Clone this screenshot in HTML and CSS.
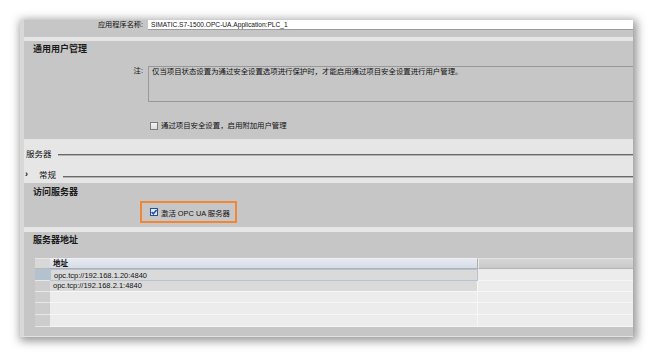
FILE: index.html
```html
<!DOCTYPE html>
<html lang="zh-CN">
<head>
<meta charset="utf-8">
<title>OPC UA</title>
<link rel="stylesheet" href="styles.css">
</head>
<body>
<div class="frame">
  <div class="row-app">
    <span class="lbl">应用程序名称:</span>
    <div class="input">SIMATIC.S7-1500.OPC-UA.Application:PLC_1</div>
  </div>
  <div class="strip s4"></div>
  <section class="sec s1">
    <h3 class="sec-title">通用用户管理</h3>
    <div class="note-row">
      <span class="lbl">注:</span>
      <div class="textarea">仅当项目状态设置为通过安全设置选项进行保护时，才能启用通过项目安全设置进行用户管理。</div>
    </div>
    <div class="chk-row">
      <span class="cb"></span>
      <span>通过项目安全设置，启用附加用户管理</span>
    </div>
  </section>
  <div class="group">
    <div class="grp-title"><span>服务器</span><span class="rule"></span></div>
    <div class="grp-sub"><span class="arrow">›</span><span class="sub-text">常规</span><span class="rule r2"></span></div>
  </div>
  <section class="sec s2">
    <h3 class="sec-title">访问服务器</h3>
    <div class="hl">
      <span class="cb checked"><svg width="8" height="8" viewBox="0 0 8 8"><path d="M1.6 4.1 L3.3 5.8 L6.6 1.9" fill="none" stroke="#1f56b4" stroke-width="1.6"/></svg></span>
      <span>激活 OPC UA 服务器</span>
    </div>
  </section>
  <div class="strip s5"></div>
  <section class="sec s3">
    <h3 class="sec-title">服务器地址</h3>
    <div class="table">
      <div class="tr th">
        <div class="rh"></div>
        <div class="c1">地址</div>
        <div class="c2"></div>
      </div>
      <div class="tr r sel">
        <div class="rh"></div>
        <div class="c1">opc.tcp://192.168.1.20:4840</div>
        <div class="c2"></div>
      </div>
      <div class="tr r filled">
        <div class="rh"></div>
        <div class="c1">opc.tcp://192.168.2.1:4840</div>
        <div class="c2"></div>
      </div>
      <div class="tr r">
        <div class="rh"></div>
        <div class="c1"></div>
        <div class="c2"></div>
      </div>
      <div class="tr r tall">
        <div class="rh"></div>
        <div class="c1"></div>
        <div class="c2"></div>
      </div>
      <div class="tr r tall">
        <div class="rh"></div>
        <div class="c1"></div>
        <div class="c2"></div>
      </div>
    </div>
  </section>
</div>
</body>
</html>
```
FILE: styles.css
```css
html, body {
  margin: 0;
  padding: 0;
  background: #ffffff;
}
body {
  width: 653px;
  height: 357px;
  overflow: hidden;
  font-family: "Liberation Sans", "Noto Sans CJK SC", sans-serif;
  font-size: 7.4px;
  color: #111;
}
.frame {
  margin: 20px 0 0 20px;
  width: 609px;
  height: 316px;
  background: #c6c6c6;
  border-left: 4px solid #d8d8d8;
  border-bottom: 1px solid #e2e2e2;
  box-shadow: 2px 2px 9px 2px rgba(0, 0, 0, 0.42);
  display: flex;
  flex-direction: column;
  overflow: hidden;
}
.lbl {
  width: 124px;
  flex: none;
  text-align: right;
  padding-right: 5px;
  box-sizing: border-box;
  white-space: nowrap;
}
.row-app {
  height: 17px;
  flex: none;
  display: flex;
  align-items: flex-start;
}
.row-app .lbl {
  line-height: 9px;
  font-size: 7.2px;
}
.input {
  flex: 1;
  height: 9px;
  line-height: 9px;
  background: #ffffff;
  border-bottom: 1px solid #9c9c9c;
  padding-left: 3px;
  font-size: 6.6px;
  white-space: nowrap;
}
.strip {
  flex: none;
  background: #e6e6e6;
}
.s4 { height: 4px; }
.s5 { height: 5px; }
.sec {
  flex: none;
  background: #c6c6c6;
  padding-left: 9px;
  box-sizing: border-box;
}
.sec-title {
  margin: 0;
  font-size: 9px;
  line-height: 12px;
  font-weight: bold;
  color: #1a1a1a;
}
.s1 {
  height: 98px;
  padding-top: 2px;
  padding-left: 0;
}
.s1 .sec-title { padding-left: 9px; }
.note-row {
  margin-top: 11px;
  display: flex;
}
.note-row .lbl {
  line-height: 10px;
}
.textarea {
  flex: 1;
  height: 34px;
  border: 1px solid #999999;
  border-right: none;
  padding: 0 0 0 3px;
  line-height: 10px;
  white-space: nowrap;
  overflow: hidden;
}
.chk-row {
  margin-top: 20px;
  margin-left: 126px;
  display: flex;
  align-items: center;
  gap: 3px;
  height: 8px;
  line-height: 8px;
}
.cb {
  width: 8px;
  height: 8px;
  box-sizing: border-box;
  border: 1px solid #7c7c7c;
  background: linear-gradient(#f4f4f4, #dcdcdc);
  flex: none;
  display: block;
}
.cb.checked {
  border-color: #2c4f86;
  background: #e3ebf7;
  position: relative;
}
.cb.checked svg {
  position: absolute;
  left: -1px;
  top: -1px;
}
.group {
  flex: none;
  height: 44px;
  background: #e6e6e6;
  padding-top: 8px;
  box-sizing: border-box;
  font-size: 8.5px;
}
.grp-title, .grp-sub {
  display: flex;
  align-items: center;
  height: 12px;
  white-space: nowrap;
}
.grp-title { padding-left: 2px; }
.grp-title .rule {
  margin-left: 6px;
  margin-top: 4px;
}
.rule {
  flex: 1;
  height: 2px;
  box-sizing: border-box;
  border-top: 1px solid #6a6a6a;
  border-bottom: 1px solid #b4b4b4;
}
.grp-sub { margin-top: 9px; }
.arrow {
  width: 14px;
  padding-left: 1px;
  font-size: 9px;
  font-weight: bold;
}
.sub-text { padding-left: 0; }
.grp-sub .rule {
  margin-left: 7px;
  margin-top: 6px;
}
.s2 {
  height: 44px;
  padding-top: 3px;
}
.hl {
  margin-top: 3px;
  margin-left: 107px;
  width: 97px;
  height: 22px;
  box-sizing: border-box;
  border: 2px solid #f08636;
  display: flex;
  align-items: center;
  padding-left: 8px;
  gap: 3px;
  white-space: nowrap;
}
.s3 {
  flex: 1;
  padding-top: 2px;
  padding-left: 9px;
}
.table {
  margin-top: 12px;
  margin-left: 2px;
  display: flex;
  flex-direction: column;
  font-size: 7.5px;
}
.tr {
  display: flex;
  height: 12px;
  box-sizing: border-box;
}
.tr .rh {
  width: 15px;
  flex: none;
  background: #cdcdcd;
  border-bottom: 1px solid #e8e8e8;
}
.tr .c1 {
  width: 428px;
  flex: none;
  padding-left: 3px;
  box-sizing: border-box;
  background: #ececec;
  border-bottom: 1px solid #f6f6f6;
  border-right: 1px solid #f6f6f6;
  white-space: nowrap;
  line-height: 11px;
}
.tr .c2 {
  flex: 1;
  background: #ececec;
  border-bottom: 1px solid #f6f6f6;
}
.th { height: 11px; }
.th .rh {
  background: #d8d8d8;
  border-top: 1px solid #e6e6e6;
  border-bottom: 1px solid #b8b8b8;
}
.th .c1 {
  background: linear-gradient(#e6e9ef, #d7dce5);
  border-top: 1px solid #eef0f4;
  border-bottom: 1px solid #aab0ba;
  border-right: 1px solid #b0b0b0;
  font-weight: bold;
  line-height: 9px;
}
.th .c2 {
  background: linear-gradient(#d6d6d6, #cacaca);
  border-top: 1px solid #e2e2e2;
  border-bottom: 1px solid #b4b4b4;
  border-left: 1px solid #e8e8e8;
}
.sel .rh { background: #b4c1cf; }
.sel .c1 {
  background: #dadada;
  border: 1px solid #b7c3d2;
}
.filled { height: 11px; }
.filled .c1 { background: #dadada; line-height: 10px; }
.r { height: 11px; }
.sel { height: 12px; }
.tall { height: 12px; }
```
